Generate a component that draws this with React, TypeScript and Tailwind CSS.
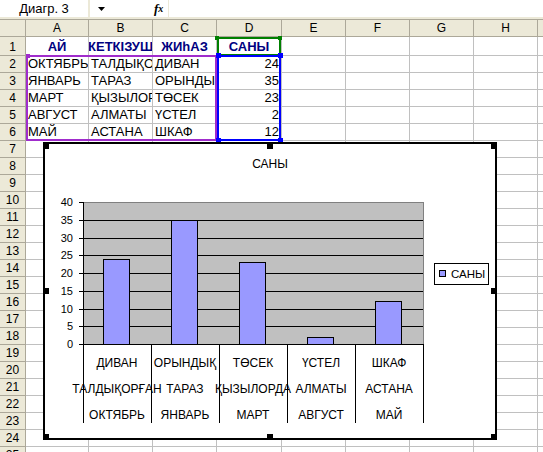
const cols = [
  { label: "A", w: "w-[63px]" },
  { label: "B", w: "w-[64px]" },
  { label: "C", w: "w-[64px]" },
  { label: "D", w: "w-[65px]" },
  { label: "E", w: "w-[64px]" },
  { label: "F", w: "w-[64px]" },
  { label: "G", w: "w-[64px]" },
  { label: "H", w: "w-[64px]" },
  { label: "I", w: "w-[64px]" },
];

const sheet: Record<number, string[]> = {
  1: ["АЙ", "КЕТКІЗУШ", "ЖИһАЗ", "САНЫ"],
  2: ["ОКТЯБРЬ", "ТАЛДЫҚОРҒАН", "ДИВАН", "24"],
  3: ["ЯНВАРЬ", "ТАРАЗ", "ОРЫНДЫҚ", "35"],
  4: ["МАРТ", "ҚЫЗЫЛОРДА", "ТӨСЕК", "23"],
  5: ["АВГУСТ", "АЛМАТЫ", "ҮСТЕЛ", "2"],
  6: ["МАЙ", "АСТАНА", "ШКАФ", "12"],
};

const rows = Array.from({ length: 25 }, (_, i) => i + 1);

// chart data: value + three category levels
const series = [
  { v: 24, cats: ["ДИВАН", "ТАЛДЫҚОРҒАН", "ОКТЯБРЬ"] },
  { v: 35, cats: ["ОРЫНДЫҚ", "ТАРАЗ", "ЯНВАРЬ"] },
  { v: 23, cats: ["ТӨСЕК", "ҚЫЗЫЛОРДА", "МАРТ"] },
  { v: 2, cats: ["ҮСТЕЛ", "АЛМАТЫ", "АВГУСТ"] },
  { v: 12, cats: ["ШКАФ", "АСТАНА", "МАЙ"] },
];

function Cell({ row, col, text }: { row: number; col: number; text?: string }) {
  const w = cols[col].w;
  let cls = "justify-start pl-[2px]";
  if (row === 1) cls = "justify-center font-bold text-[#000080]";
  else if (col === 3) cls = "justify-end pr-[2px]";
  return (
    <div
      className={`${w} shrink-0 h-full flex items-end overflow-hidden whitespace-nowrap border-r border-b border-[#c0c0c0] text-[13px] leading-[16px] ${cls}`}
    >
      {text}
    </div>
  );
}

function Chart() {
  const top = 60;
  const bottom = 202;
  const left = 40;
  const right = 380;
  const step = 68;
  const unit = (bottom - top) / 40;
  const ticks = [0, 5, 10, 15, 20, 25, 30, 35, 40];
  const handles = [
    [0, 1], [224, 1], [448, 1],
    [0, 146], [448, 146],
    [0, 292], [224, 292], [448, 292],
  ];
  return (
    <svg width={454} height={298} className="block font-['Liberation_Sans',Arial,sans-serif]">
      <rect x={1} y={1} width={452} height={296} fill="#fff" stroke="#000" strokeWidth={2} />
      <text x={227} y={26} fontSize={12} textAnchor="middle" fill="#000">САНЫ</text>

      <rect x={left + 0.5} y={top + 0.5} width={right - left} height={bottom - top} fill="#c0c0c0" stroke="#808080" />
      {ticks.map((t) => {
        const y = Math.round(bottom - t * unit) + 0.5;
        return (
          <g key={t}>
            {t > 0 && t < 40 && <line x1={left} x2={right} y1={y} y2={y} stroke="#000" />}
            <line x1={left - 4} x2={left} y1={y} y2={y} stroke="#000" />
            <text x={30} y={y + 3.5} fontSize={11} textAnchor="end" fill="#000">{t}</text>
          </g>
        );
      })}
      <line x1={left + 0.5} x2={left + 0.5} y1={top} y2={bottom + 1} stroke="#000" />
      <line x1={left} x2={right + 1} y1={bottom + 0.5} y2={bottom + 0.5} stroke="#000" />

      {series.map((s, i) => {
        const h = Math.round(s.v * unit);
        const x = left + step * i + 20;
        return (
          <rect key={i} x={x + 0.5} y={bottom - h + 0.5} width={26} height={h} fill="#9999ff" stroke="#000" />
        );
      })}

      {[0, 1, 2, 3, 4, 5].map((i) => (
        <line key={i} x1={left + step * i + 0.5} x2={left + step * i + 0.5} y1={bottom} y2={281} stroke="#000" />
      ))}
      {series.map((s, i) =>
        s.cats.map((c, j) => (
          <text key={`${i}-${j}`} x={left + step * i + 34} y={225 + j * 26} fontSize={12} textAnchor="middle" fill="#000">
            {c}
          </text>
        ))
      )}

      <rect x={391.5} y={121.5} width={54} height={21} fill="#fff" stroke="#000" />
      <rect x={396.5} y={128.5} width={6} height={6} fill="#9999ff" stroke="#000" />
      <text x={408} y={136} fontSize={11.5} fill="#000">САНЫ</text>

      {handles.map(([x, y], i) => (
        <rect key={i} x={x} y={y} width={6} height={6} fill="#000" />
      ))}
    </svg>
  );
}

export default function App() {
  return (
    <div className="relative w-[543px] h-[452px] overflow-hidden bg-white text-black font-['Liberation_Sans',Arial,sans-serif]">
      {/* formula bar */}
      <div className="h-[19px] flex border-b-2 border-[#ece9d8] bg-white">
        <div className="w-[88px] flex items-center justify-center text-[13px] leading-[17px]">Диагр. 3</div>
        <div className="w-[2px] bg-[#ece9d8]" />
        <div className="w-[64px] flex items-center pl-[8px]">
          <svg width={7} height={4} className="block">
            <polygon points="0,0 7,0 3.5,4" fill="#000" />
          </svg>
        </div>
        <div className="w-[14px] flex items-center justify-start font-['Liberation_Serif',serif] italic font-bold text-[13px] leading-[17px]">
          f<span className="text-[10px]">x</span>
        </div>
        <div className="w-[1px] bg-[#ece9d8]" />
        <div className="flex-1 bg-white" />
      </div>

      {/* column headers */}
      <div className="h-[18px] flex border-t border-b border-[#aca899] bg-[#ece9d8] text-[12px] leading-[16px]">
        <div className="w-[26px] shrink-0 border-r border-[#aca899]" />
        {cols.map((c) => (
          <div key={c.label} className={`${c.w} shrink-0 flex items-center justify-center border-r border-[#aca899]`}>
            {c.label}
          </div>
        ))}
      </div>

      {/* rows */}
      {rows.map((r) => (
        <div key={r} className={`flex ${r === 1 ? "h-[19px]" : "h-[17px]"}`}>
          <div className="w-[26px] shrink-0 flex items-end justify-center bg-[#ece9d8] border-r border-b border-[#aca899] text-[12px] leading-[16px]">
            {r}
          </div>
          {cols.map((c, ci) => (
            <Cell key={c.label} row={r} col={ci} text={sheet[r]?.[ci]} />
          ))}
        </div>
      ))}

      {/* range highlights */}
      <div className="absolute left-[217px] top-[37px] w-[64px] h-[19px] border-2 border-[#008000]" />
      <div className="absolute left-[215px] top-[36px] w-[4px] h-[4px] bg-[#008000]" />
      <div className="absolute left-[278px] top-[36px] w-[4px] h-[4px] bg-[#008000]" />

      <div className="absolute left-[26px] top-[55px] w-[191px] h-[86px] border-2 border-[#a02ccc]" />
      <div className="absolute left-[26px] top-[54px] w-[4px] h-[4px] bg-[#a02ccc]" />

      <div className="absolute left-[217px] top-[55px] w-[64px] h-[86px] border-2 border-[#0000ff]" />
      <div className="absolute left-[216px] top-[53px] w-[5px] h-[5px] bg-[#0000ff]" />
      <div className="absolute left-[278px] top-[53px] w-[5px] h-[5px] bg-[#0000ff]" />
      <div className="absolute left-[216px] top-[138px] w-[5px] h-[5px] bg-[#0000ff]" />
      <div className="absolute left-[278px] top-[138px] w-[5px] h-[5px] bg-[#0000ff]" />

      {/* embedded chart */}
      <div className="absolute left-[43px] top-[142px]">
        <Chart />
      </div>
    </div>
  );
}
